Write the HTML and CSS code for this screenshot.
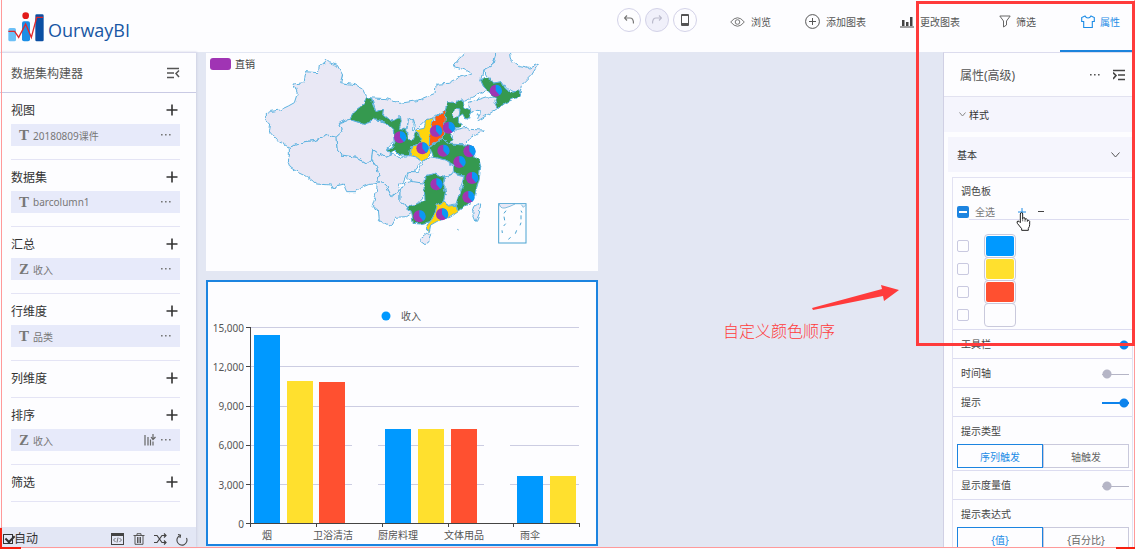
FILE: index.html
```html
<!DOCTYPE html>
<html lang="zh-CN">
<head>
    <meta charset="UTF-8">
    <meta name="viewport" content="width=device-width, initial-scale=1.0">
    <title>OurwayBI</title>
    <link rel="stylesheet" href="styles.css">
</head>
<body>
    <!-- Shared icons -->
    <svg class="defs" width="0" height="0" aria-hidden="true">
        <symbol id="plus" viewBox="0 0 12 12"><path d="M6 0.5V11.5M0.5 6H11.5" stroke="currentColor" stroke-width="1.6"/></symbol>
        <symbol id="dots" viewBox="0 0 12 4"><path d="M1 1h1.6v1.6H1zM5 1h1.6v1.6H5zM9 1h1.6v1.6H9z" fill="currentColor"/></symbol>
    </svg>

    <div class="app">
        <!-- Top bar -->
        <header class="topbar">
            <a class="brand" href="#">
                <svg class="logo" viewBox="24 36 108 90">
                    <rect x="25" y="84" width="23" height="40" rx="5" fill="#6cc0f7"/>
                    <rect x="66" y="64" width="24" height="60" rx="6" fill="#1b8ee6"/>
                    <rect x="106" y="43" width="25" height="81" rx="4" fill="#0b4fa3"/>
                    <circle cx="77" cy="47" r="10" fill="#e21a1a"/>
                    <path d="M25 94H44L56 112L77 72L94 112L110 52H129" fill="none" stroke="#e0282c" stroke-width="4"/>
                </svg>
                <span>OurwayBI</span>
            </a>
            <div class="history">
                <button class="round" aria-label="撤销"><svg width="10" height="10" viewBox="0 0 10 10"><path d="M3 0.5L0.5 3L3 5.5M0.5 3H6Q9.500 3 9.500 8.500" fill="none" stroke="#777" stroke-width="1.2"/></svg></button>
                <button class="round off" aria-label="重做"><svg width="10" height="10" viewBox="0 0 10 10"><path d="M7 0.500L9.500 3L7 5.500M9.500 3H4Q0.500 3 0.500 8.500" fill="none" stroke="#bbc" stroke-width="1.200"/></svg></button>
                <button class="round" aria-label="手机"><svg width="8" height="12" viewBox="0 0 8 12"><rect width="8" height="12" rx="1" fill="#555"/><path d="M1 2h6v7H1z" fill="#fff"/></svg></button>
            </div>
            <nav class="tabs">
                <button class="tab"><svg width="15" height="14" viewBox="0 0 15 14"><path d="M0.700 7Q7.500 -1.500 14.300 7Q7.500 15.500 0.700 7Z" fill="none" stroke="#777"/><circle cx="7.500" cy="7" r="2.300" fill="none" stroke="#777"/></svg>浏览</button>
                <button class="tab"><svg width="15" height="15" viewBox="0 0 15 15"><circle cx="7.500" cy="7.500" r="6.900" fill="none" stroke="#555"/><path d="M7.500 4V11M4 7.500H11" stroke="#555"/></svg>添加图表</button>
                <button class="tab"><svg width="14" height="12" viewBox="0 0 14 12"><path d="M2 4h2.500v6H2zM6 6h2.500v4H6zM10 1h2.500v9h-2.500zM0 10.500h14v1H0z" fill="#444"/></svg>更改图表</button>
                <button class="tab side"><svg width="12" height="13" viewBox="0 0 12 13"><path d="M0.800 1H11.200L7.500 6V10L4.500 12V6Z" fill="none" stroke="#666"/></svg>筛选</button>
                <button class="tab side active"><svg width="14" height="14" viewBox="0 0 14 14"><path d="M4 1L0.700 2.500V6.500H2.700V12.500H11.300V6.500H13.300V2.500L10 1Q9 3 7 3Q5 3 4 1Z" fill="none" stroke="#1c8ce6" stroke-width="1.100"/></svg>属性</button>
            </nav>
        </header>

        <div class="main">
            <!-- Dataset builder -->
            <aside class="sidebar">
                <div class="sidebar-head">
                    <h2>数据集构建器</h2>
                    <button class="icon" aria-label="收起"><svg width="13" height="12" viewBox="0 0 13 12"><path d="M0 1.500H12M0 6H7M0 10.500H7M12 3.500L9 6.500L12 10" fill="none" stroke="#555" stroke-width="1.500"/></svg></button>
                </div>
                <div class="sections">
                    <section class="section">
                        <div class="section-title"><h3>视图</h3><button class="icon" aria-label="添加视图"><svg width="12" height="12"><use href="#plus"/></svg></button></div>
                        <div class="item"><b>T</b><span>20180809课件</span><button class="icon" aria-label="更多"><svg width="12" height="4"><use href="#dots"/></svg></button></div>
                    </section>
                    <section class="section">
                        <div class="section-title"><h3>数据集</h3><button class="icon" aria-label="添加数据集"><svg width="12" height="12"><use href="#plus"/></svg></button></div>
                        <div class="item"><b>T</b><span>barcolumn1</span><button class="icon" aria-label="更多"><svg width="12" height="4"><use href="#dots"/></svg></button></div>
                    </section>
                    <section class="section">
                        <div class="section-title"><h3>汇总</h3><button class="icon" aria-label="添加汇总"><svg width="12" height="12"><use href="#plus"/></svg></button></div>
                        <div class="item"><b>Z</b><span>收入</span><button class="icon" aria-label="更多"><svg width="12" height="4"><use href="#dots"/></svg></button></div>
                    </section>
                    <section class="section">
                        <div class="section-title"><h3>行维度</h3><button class="icon" aria-label="添加行维度"><svg width="12" height="12"><use href="#plus"/></svg></button></div>
                        <div class="item"><b>T</b><span>品类</span><button class="icon" aria-label="更多"><svg width="12" height="4"><use href="#dots"/></svg></button></div>
                    </section>
                    <section class="section empty">
                        <div class="section-title"><h3>列维度</h3><button class="icon" aria-label="添加列维度"><svg width="12" height="12"><use href="#plus"/></svg></button></div>
                    </section>
                    <section class="section">
                        <div class="section-title"><h3>排序</h3><button class="icon" aria-label="添加排序"><svg width="12" height="12"><use href="#plus"/></svg></button></div>
                        <div class="item"><b>Z</b><span>收入</span>
                            <button class="icon" aria-label="降序"><svg width="12" height="12" viewBox="0 0 12 12"><path d="M1 1V11.500M4 3V11.500M6.500 5.500V11.500M9 7.500V11.500M9 0V5M7 3L9 5.500L11.500 3" fill="none" stroke="#666" stroke-width="1.200"/></svg></button>
                            <button class="icon" aria-label="更多"><svg width="12" height="4"><use href="#dots"/></svg></button>
                        </div>
                    </section>
                    <section class="section empty">
                        <div class="section-title"><h3>筛选</h3><button class="icon" aria-label="添加筛选"><svg width="12" height="12"><use href="#plus"/></svg></button></div>
                    </section>
                </div>
                <div class="sidebar-foot">
                    <label class="auto"><input type="checkbox" checked>自动</label>
                    <div class="tools">
                        <button class="icon" aria-label="脚本"><svg width="13" height="12" viewBox="0 0 13 12"><rect x="0.500" y="0.500" width="12" height="11" fill="none" stroke="#444"/><path d="M0 0h13v3H0z" fill="#444"/><path d="M4.500 5L2.500 7L4.500 9M8.500 5L10.500 7L8.500 9M7 4.500L6 9.500" fill="none" stroke="#555" stroke-width="0.800"/></svg></button>
                        <button class="icon" aria-label="删除"><svg width="12" height="12" viewBox="0 0 12 12"><path d="M0.500 2.500H11.500M4 2V0.700H8V2M2 3V11.300H10V3M4.500 4V10M6 4V10M7.500 4V10" fill="none" stroke="#555"/></svg></button>
                        <button class="icon" aria-label="随机"><svg width="13" height="12" viewBox="0 0 13 12"><path d="M0 2.500H3L8 9.500H12M0 9.500H3L8 2.500H12M10 0.500L12 2.500L10 4.500M10 7.500L12 9.500L10 11.500" fill="none" stroke="#444" stroke-width="1.200"/></svg></button>
                        <button class="icon" aria-label="刷新"><svg width="12" height="13" viewBox="0 0 12 13"><path d="M4 2.500A5 5 0 1 0 10.500 5M2 1.500L4.500 2.200L4 5" fill="none" stroke="#444" stroke-width="1.100"/></svg></button>
                    </div>
                </div>
            </aside>

            <!-- Report canvas -->
            <main class="canvas">
                <div class="card map">
                    <div class="map-legend"><i></i>直销</div>
                    <svg viewBox="18 9 1176 654">
                        <defs>
                            <filter id="coast" x="0" y="0" width="1" height="1">
                                <feTurbulence type="fractalNoise" baseFrequency="0.07" numOctaves="1" seed="4" result="n"/>
                                <feDisplacementMap in="SourceGraphic" in2="n" scale="16" xChannelSelector="R" yChannelSelector="G"/>
                            </filter>
                            <g id="pie">
                                <circle r="18" fill="#a034b4"/>
                                <path d="M0 0V-18A18 18 0 0 1 12 14Z" fill="#0a98f5"/>
                            </g>
                        </defs>
                        <g class="land" filter="url(#coast)">
                            <!-- north and west -->
                            <path d="M283 158L292 130L282 102L312 98L318 65L355 68L358 48L372 40L376 28L388 38L412 46L428 75L422 98L465 104L488 118L500 143L488 165L462 185L448 208L415 220L426 245L408 262L385 256L345 272L315 275L300 280L268 292L255 285L228 268L208 245L212 222L196 212L196 192L212 184L240 180L265 168Z"/>
                            <path d="M268 292L300 280L315 275L345 272L385 256L408 262L412 300L425 315L470 322L498 340L515 330L530 350L537 378L532 400L505 404L485 412L465 425L440 425L430 402L405 408L400 418L395 405L350 402L320 380L295 368L270 352L262 330L268 318Z"/>
                            <path d="M408 262L426 245L415 220L448 208L495 223L520 208L555 216L580 240L582 275L560 298L578 312L555 322L535 310L518 298L515 330L498 340L470 322L425 315L412 300Z"/>
                            <path d="M500 143L560 146L600 160L650 152L705 130L708 103L745 100L780 82L815 72L795 60L760 48L778 25L798 9L792 -12H894L885 20L878 45L850 60L842 90L850 108L860 120L815 142L792 155L785 147L765 158L742 155L735 185L718 190L697 204L680 210L648 240L640 205L625 212L618 240L598 235L602 200L570 212L548 195L550 178L528 185L514 145Z"/>
                            <path d="M850 60L878 45L885 20L895 -12H925L932 28L960 50L985 55L1015 42L995 75L965 105L960 130L945 125L920 115L905 95L878 100L865 85Z"/>
                            <path d="M805 158L860 140L888 145L898 172L870 190L835 212L830 205L845 180L828 178L810 190Z"/>
                            <!-- central and south -->
                            <path d="M518 298L535 310L555 322L578 312L600 322L630 320L655 325L660 340L640 365L622 365L610 395L600 400L590 435L575 440L560 410L540 392L532 400L537 378L530 350L515 330Z"/>
                            <path d="M532 400L540 392L560 410L575 440L600 420L600 455L622 468L635 490L620 500L585 502L570 528L555 520L538 512L535 478L516 470L525 440L530 420Z"/>
                            <path d="M600 420L615 398L650 392L674 400L675 435L650 462L622 468L600 455Z"/>
                            <path d="M668 335L692 318L735 330L762 350L758 370L733 382L700 372L675 378L672 400L640 395L620 385L625 365L655 365Z"/>
                            <path d="M733 382L765 370L792 378L778 430L768 462L745 466L730 455L736 430Z"/>
                            <path d="M752 268L770 238L800 232L808 238L850 240L838 250L812 262L795 285L760 285L750 282Z"/>
                            <path d="M620 245L625 210L640 205L638 240L652 250L640 270L622 268Z"/>
                            <path d="M664 562L682 548L695 553L690 572L675 584L663 575Z"/>
                            <path d="M835 458L842 462L838 490L828 515L818 490L825 465Z"/>
                            <path d="M832 342L843 350L838 356L830 350Z"/>
                            <g fill="#35994f">
                                <path d="M448 208L462 185L488 165L500 143L514 145L520 172L528 185L550 178L548 195L570 212L602 200L604 215L598 235L618 240L622 268L636 270L648 245L662 262L665 275L650 285L632 290L628 318L600 315L585 300L572 312L560 298L578 292L585 275L580 240L555 216L520 208L495 223Z"/>
                                <path d="M842 90L855 82L868 90L870 83L878 100L905 95L915 115L935 128L955 122L965 135L945 145L915 160L895 175L885 155L888 145L860 120L850 108Z"/>
                                <path d="M735 185L742 155L765 158L785 147L792 175L812 185L805 208L795 205L788 192L776 200L775 215L788 222L770 235L748 250L760 268L748 282L730 262Z"/>
                                <path d="M690 290L728 265L750 282L795 285L820 290L825 320L838 332L842 350L838 385L828 420L820 450L800 465L775 485L768 465L778 435L790 405L792 375L765 370L762 345L735 330L700 320Z"/>
                                <path d="M675 378L700 372L733 382L730 400L736 430L730 455L712 465L705 490L690 515L660 522L640 520L635 490L622 468L650 462L675 450L672 410Z"/>
                            </g>
                            <g fill="#ffd50a">
                                <path d="M680 210L697 203L692 240L688 285L692 310L668 335L650 322L630 318L635 288L655 285L665 270L648 240L672 235Z"/>
                                <path d="M705 490L712 465L730 455L745 468L768 466L775 485L750 502L715 512L692 525L688 545L680 540L678 525L695 510Z"/>
                            </g>
                            <path fill="#ff5a0a" d="M697 215L718 190L738 183L735 215L730 260L712 275L688 288L690 245Z"/>
                            <path d="M757 192L768 178L780 180L776 200L762 202Z"/>
                        </g>
                        <!-- South China Sea inset -->
                        <g fill="none" stroke="#4ba3d2" stroke-width="3">
                            <rect x="896" y="461" width="82" height="118"/>
                            <path d="M898 462Q900 476 915 474Q930 470 945 462M964 464L970 472L976 466" stroke-width="2" fill="#e9e8f5"/>
                            <path d="M918 482L912 490M912 500L914 511M917 521L911 528M906 541L907 549M925 568L932 562M946 551L950 541M960 526L963 518M963 508V496M966 488L963 482M772 538L776 540"/>
                        </g>
                        <use href="#pie" x="600" y="262"/>
                        <use href="#pie" x="887" y="122"/>
                        <use href="#pie" x="708" y="243"/>
                        <use href="#pie" x="746" y="233"/>
                        <use href="#pie" x="667" y="295"/>
                        <use href="#pie" x="730" y="302"/>
                        <use href="#pie" x="808" y="304"/>
                        <use href="#pie" x="778" y="336"/>
                        <use href="#pie" x="816" y="384"/>
                        <use href="#pie" x="805" y="441"/>
                        <use href="#pie" x="709" y="403"/>
                        <use href="#pie" x="658" y="499"/>
                        <use href="#pie" x="726" y="493"/>
                    </svg>
                </div>

                <div class="card chart">
                    <svg viewBox="0 0 388 262">
                        <circle cx="178" cy="34" r="4.500" fill="#0099ff"/>
                        <text x="193" y="38">收入</text>
                        <path class="grid" d="M43 45.500H371M43 84.500H371M43 124.500H371M43 163.500H371M43 202.500H371"/>
                        <g fill="#0099ff">
                            <rect x="46" y="53" width="26" height="188"/>
                            <rect x="177" y="147" width="26" height="94"/>
                            <rect x="309" y="194" width="26" height="47"/>
                        </g>
                        <g fill="#ffe02e">
                            <rect x="79" y="99" width="26" height="142"/>
                            <rect x="210" y="147" width="26" height="94"/>
                            <rect x="342" y="194" width="26" height="47"/>
                        </g>
                        <g fill="#ff5030">
                            <rect x="111" y="100" width="26" height="141"/>
                            <rect x="243" y="147" width="26" height="94"/>
                        </g>
                        <g fill="#fdfdff">
                            <rect x="144" y="147" width="26" height="94"/>
                            <rect x="276" y="147" width="26" height="94"/>
                        </g>
                        <path class="axis" d="M42.500 45V245M38 45.500H43M38 84.500H43M38 124.500H43M38 163.500H43M38 202.500H43M38 241.500H372M108.500 242V245M174.500 242V245M240.500 242V245M305.500 242V245M371.500 242V245"/>
                        <g text-anchor="end">
                            <text x="36" y="50">15,000</text>
                            <text x="36" y="89">12,000</text>
                            <text x="36" y="128">9,000</text>
                            <text x="36" y="167">6,000</text>
                            <text x="36" y="207">3,000</text>
                            <text x="36" y="246">0</text>
                        </g>
                        <g text-anchor="middle">
                            <text x="59" y="257">烟</text>
                            <text x="125" y="257">卫浴清洁</text>
                            <text x="190" y="257">厨房料理</text>
                            <text x="256" y="257">文体用品</text>
                            <text x="322" y="257">雨伞</text>
                        </g>
                    </svg>
                </div>
            </main>

            <!-- Properties -->
            <aside class="props">
                <div class="props-head">
                    <h2>属性(高级)</h2>
                    <button class="icon" aria-label="更多"><svg width="12" height="4"><use href="#dots"/></svg></button>
                    <button class="icon" aria-label="收起"><svg width="13" height="12" viewBox="0 0 13 12"><path d="M0 1.500H12M5 6H12M5 10.500H12M0 3.500L3 6.500L0 10" fill="none" stroke="#444" stroke-width="1.600"/></svg></button>
                </div>
                <button class="fold style"><svg width="7" height="5" viewBox="0 0 7 5"><path d="M0.500 0.500L3.500 4L6.500 0.500" fill="none" stroke="#888"/></svg>样式</button>
                <button class="fold basic">基本<svg width="9" height="6" viewBox="0 0 9 6"><path d="M0.500 0.500L4.500 5L8.500 0.500" fill="none" stroke="#555"/></svg></button>

                <div class="form">
                    <div class="palette">
                        <h4>调色板</h4>
                        <div class="palette-bar">
                            <label><input class="check all" type="checkbox">全选</label>
                            <button class="icon add" aria-label="添加颜色"><svg width="8" height="8" viewBox="0 0 8 8"><path d="M4 0V8M0 4H8" stroke="#1c8ce6"/></svg></button>
                            <button class="icon" aria-label="删除颜色"><svg width="8" height="8" viewBox="0 0 8 8"><path d="M1 3.500H7" stroke="#444"/></svg></button>
                            <svg class="pointer" width="15" height="19" viewBox="0 0 45 57"><path d="M13 32V6Q13 2 17 2Q20 2 20 6V20Q22 15 27 18V22Q31 18 34 23V26Q39 23 41 28V38Q41 44 37 49V55H17V50L4 34Q1 28 6 27Q9 27 13 32Z" fill="#fff" stroke="#222" stroke-width="3"/><path d="M20 18V28M27 22V29M34 26V30" stroke="#222" stroke-width="2"/></svg>
                        </div>
                        <ul class="colors">
                            <li><input class="check" type="checkbox" aria-label="颜色1"><button class="swatch blue" aria-label="蓝色"></button></li>
                            <li><input class="check" type="checkbox" aria-label="颜色2"><button class="swatch yellow" aria-label="黄色"></button></li>
                            <li><input class="check" type="checkbox" aria-label="颜色3"><button class="swatch red" aria-label="红色"></button></li>
                            <li><input class="check" type="checkbox" aria-label="颜色4"><button class="swatch" aria-label="无颜色"></button></li>
                        </ul>
                    </div>
                    <label class="row">工具栏<input class="switch" type="checkbox" checked></label>
                    <label class="row">时间轴<input class="switch" type="checkbox"></label>
                    <label class="row">提示<input class="switch" type="checkbox" checked></label>
                    <div class="group">
                        <h4>提示类型</h4>
                        <div class="choice"><button class="on">序列触发</button><button>轴触发</button></div>
                    </div>
                    <label class="row">显示度量值<input class="switch" type="checkbox"></label>
                    <div class="group">
                        <h4>提示表达式</h4>
                        <div class="choice"><button class="on">{值}</button><button>{百分比}</button></div>
                    </div>
                </div>
            </aside>
        </div>

        <!-- Notes drawn over the page -->
        <div class="capture"></div>
        <div class="note-frame"></div>
        <svg class="note-arrow" width="90" height="26" viewBox="0 0 90 26"><path d="M2 23L72 4L71 0L89 5L74 16L73 11L3 25Z" fill="#ff3b3b"/></svg>
        <p class="note-text">自定义颜色顺序</p>
    </div>
</body>
</html>
```
FILE: styles.css
```css
* {
    box-sizing: border-box;
}

body {
    margin: 0;
    font-family: "Noto Sans", "Noto Sans CJK SC", sans-serif;
    font-size: 10px;
    color: #555;
    background-color: #fdfdff;
}

h2, h3, h4, p, ul {
    margin: 0;
    padding: 0;
    font-weight: normal;
}

button {
    font-family: inherit;
    font-size: 10px;
    color: inherit;
    padding: 0;
    border: none;
    background: none;
    cursor: pointer;
}

svg {
    display: block;
    flex: none;
}

.defs {
    position: absolute;
}

.icon {
    display: flex;
    align-items: center;
    justify-content: center;
}

.app {
    position: relative;
    display: flex;
    flex-direction: column;
    height: 100vh;
    padding-bottom: 2px;
    overflow: hidden;
}

/* Top bar */
.topbar {
    display: flex;
    flex: none;
    height: 52px;
    background-color: #fdfdff;
}

.brand {
    display: flex;
    align-items: center;
    gap: 4px;
    margin-right: auto;
    padding: 2px 0 0 8px;
    color: #1857a4;
    font-family: "Open Sans", sans-serif;
    font-size: 18px;
    text-decoration: none;
}

.brand span {
    padding-top: 5px;
}

.logo {
    width: 36px;
    height: 30px;
}

.history {
    display: flex;
    gap: 4px;
    padding: 8px 16px 0 0;
}

.round {
    display: flex;
    align-items: center;
    justify-content: center;
    width: 24px;
    height: 24px;
    border: 1px solid #d3d2e8;
    border-radius: 50%;
}

.round.off {
    background-color: #f0f0fa;
}

.tabs {
    display: flex;
}

.tab {
    display: flex;
    align-items: center;
    gap: 6px;
    padding: 0 17px 7px;
    border-bottom: 2px solid transparent;
}

.tab.side {
    gap: 5px;
    padding: 0 24px 7px 22px;
}

.tab.active {
    padding-right: 15px;
    padding-left: 21px;
    color: #1c8ce6;
    border-bottom-color: #1c84dc;
}

.main {
    display: flex;
    flex: 1;
    min-height: 0;
}

/* Dataset builder */
.sidebar {
    position: relative;
    display: flex;
    flex-direction: column;
    width: 196px;
    border-top: 1px solid #dcdcee;
    box-shadow: 1px 0 2px #cfd2e4;
}

.sidebar-head {
    display: flex;
    align-items: center;
    justify-content: space-between;
    height: 40px;
    padding: 0 16px 0 11px;
    border-bottom: 1px solid #c9cae4;
}

.sidebar-head h2, .props-head h2 {
    font-size: 12px;
}

.sections {
    flex: 1;
    padding: 0 16px 0 11px;
}

.section {
    height: 67px;
    padding-top: 3px;
    border-bottom: 1px solid #e4e4f5;
}

.section.empty {
    height: 37px;
}

.section-title {
    display: flex;
    align-items: center;
    justify-content: space-between;
    height: 28px;
    padding-right: 2px;
    color: #333;
}

.section-title h3 {
    font-size: 12px;
}

.item {
    display: flex;
    align-items: center;
    gap: 4px;
    height: 22px;
    padding: 0 8px;
    color: #777;
    background-color: #e7eafa;
}

.item b {
    font-family: "Liberation Serif", serif;
    font-size: 15px;
}

.item span {
    flex: 1;
}

.sidebar-foot {
    display: flex;
    align-items: center;
    justify-content: space-between;
    height: 20px;
    padding: 4px 8px 0 3px;
    background-color: #e3e7f5;
}

.auto {
    display: flex;
    align-items: center;
    gap: 1px;
    font-size: 12px;
    line-height: 16px;
    color: #333;
}

.auto input {
    appearance: none;
    width: 10px;
    height: 10px;
    margin: 0;
    border: 1px solid #333;
}

.auto input:checked::after {
    content: "";
    display: block;
    width: 4px;
    height: 7px;
    margin-left: 3px;
    border: solid #333;
    border-width: 0 2px 2px 0;
    transform: rotate(45deg) translate(-1px, -1px);
}

.tools {
    display: flex;
    gap: 9px;
}

/* Canvas */
.canvas {
    display: flex;
    flex: 1;
    flex-direction: column;
    gap: 9px;
    min-width: 0;
    padding: 1px 345px 0 10px;
    background-color: #e3e7f3;
}

.card {
    position: relative;
    background-color: #fdfdff;
}

.card svg {
    width: 100%;
}

.map-legend {
    position: absolute;
    top: 3px;
    left: 4px;
    display: flex;
    align-items: center;
    gap: 4px;
    line-height: 16px;
    color: #444;
}

.map-legend i {
    width: 21px;
    height: 12px;
    border-radius: 3px;
    background-color: #a034b4;
}

.land {
    fill: #e9e8f5;
    stroke: #5cb2e0;
    stroke-width: 3;
    stroke-linejoin: round;
}

.chart {
    border: 2px solid #1c84e0;
}

.chart text {
    font-size: 10px;
    fill: #555;
}

.grid {
    stroke: #cccde2;
}

.axis {
    fill: none;
    stroke: #444;
}

/* Properties */
.props {
    width: 192px;
    border-top: 1px solid #dcdcee;
    border-left: 1px solid #d0d0e4;
    overflow: hidden;
}

.props-head {
    display: flex;
    align-items: center;
    gap: 12px;
    height: 44px;
    padding: 0 9px 0 16px;
    border-bottom: 1px solid #e2e2f0;
}

.props-head h2 {
    flex: 1;
}

.fold {
    display: flex;
    align-items: center;
    height: 35px;
    color: #333;
    background-color: #f5f5fd;
}

.fold.style {
    width: 100%;
    gap: 3px;
    padding-left: 15px;
}

.fold.basic {
    justify-content: space-between;
    width: calc(100% - 6px);
    margin: 5px 3px 5px 4px;
    padding: 0 13px 0 9px;
}

.form {
    margin: 0 2px 0 8px;
    border: 1px solid #e2e2f2;
    color: #444;
}

.palette {
    height: 152px;
    padding: 5px 3px 0 4px;
    border-bottom: 1px solid #dcdcf0;
}

.form h4 {
    padding-left: 4px;
    font-size: 10px;
    line-height: 16px;
}

.palette-bar {
    position: relative;
    display: flex;
    align-items: center;
    gap: 11px;
    height: 21px;
    padding-top: 4px;
    color: #777;
}

.palette-bar::after {
    content: "";
    position: absolute;
    right: 0;
    bottom: 0;
    left: 12px;
    border-bottom: 1px solid #dcdcf0;
}

.palette-bar label {
    display: flex;
    align-items: center;
    gap: 6px;
    line-height: 14px;
}

.add {
    margin-left: 12px;
}

.pointer {
    position: absolute;
    top: 13px;
    left: 59px;
    z-index: 1;
}

.check {
    appearance: none;
    width: 12px;
    height: 12px;
    margin: 0;
    border: 1px solid #c9c9e0;
    border-radius: 2px;
}

.check.all {
    border: none;
    background: linear-gradient(#fff, #fff) center / 8px 2px no-repeat #1c84e0;
}

.colors {
    padding-top: 14px;
    list-style: none;
}

.colors li {
    display: flex;
    align-items: center;
    gap: 15px;
    height: 23px;
}

.swatch {
    width: 32px;
    height: 24px;
    border: 1px solid #c9c9dc;
    border-radius: 4px;
    padding: 1px;
    background-clip: content-box;
}

.swatch.blue {
    background-color: #0099ff;
}

.swatch.yellow {
    background-color: #ffe02e;
}

.swatch.red {
    background-color: #ff5030;
}

.row {
    display: flex;
    align-items: center;
    justify-content: space-between;
    height: 29px;
    padding: 0 3px 2px 8px;
    border-bottom: 1px solid #dcdcf0;
}

.switch {
    appearance: none;
    width: 27px;
    height: 10px;
    margin: 4px 0 0;
    background: radial-gradient(circle at 5px 5px, #b5b5c6 4px, transparent 5px), linear-gradient(#b5b5c6, #b5b5c6) center / 100% 1px no-repeat;
}

.switch:checked {
    background: radial-gradient(circle at 22px 5px, #0d83ec 4px, transparent 5px), linear-gradient(#0d83ec, #0d83ec) center / 100% 2px no-repeat;
}

.group {
    height: 54px;
    padding: 6px 3px 0 4px;
    border-bottom: 1px solid #dcdcf0;
}

.choice {
    display: flex;
    margin-top: 5px;
}

.choice button {
    flex: 1;
    height: 24px;
    border: 1px solid #c9c9dc;
    color: #666;
}

.choice .on {
    border-color: #1c84e0;
    color: #1c8ce6;
}

/* Notes over the page */
.capture {
    position: absolute;
    top: 0;
    right: 0;
    bottom: 1px;
    left: 1px;
    border: 1px solid #ff9a9a;
    border-top: none;
    pointer-events: none;
}

.capture::before, .capture::after {
    content: "";
    position: absolute;
    bottom: -2px;
    width: 19px;
    height: 2px;
    background-color: #f81f10;
}

.capture::before {
    left: -2px;
    height: 19px;
    background: none;
    border: solid #f81f10;
    border-width: 0 0 2px 2px;
}

.capture::after {
    right: -1px;
}

.note-frame {
    position: absolute;
    top: 1px;
    right: 0;
    width: 219px;
    height: 345px;
    border: 3px solid #ff3b3b;
    pointer-events: none;
}

.note-arrow {
    position: absolute;
    top: 285px;
    right: 235px;
}

.note-text {
    position: absolute;
    top: 319px;
    right: 300px;
    font-size: 16px;
    font-weight: 300;
    line-height: 24px;
    color: #ff3b3b;
}
```
